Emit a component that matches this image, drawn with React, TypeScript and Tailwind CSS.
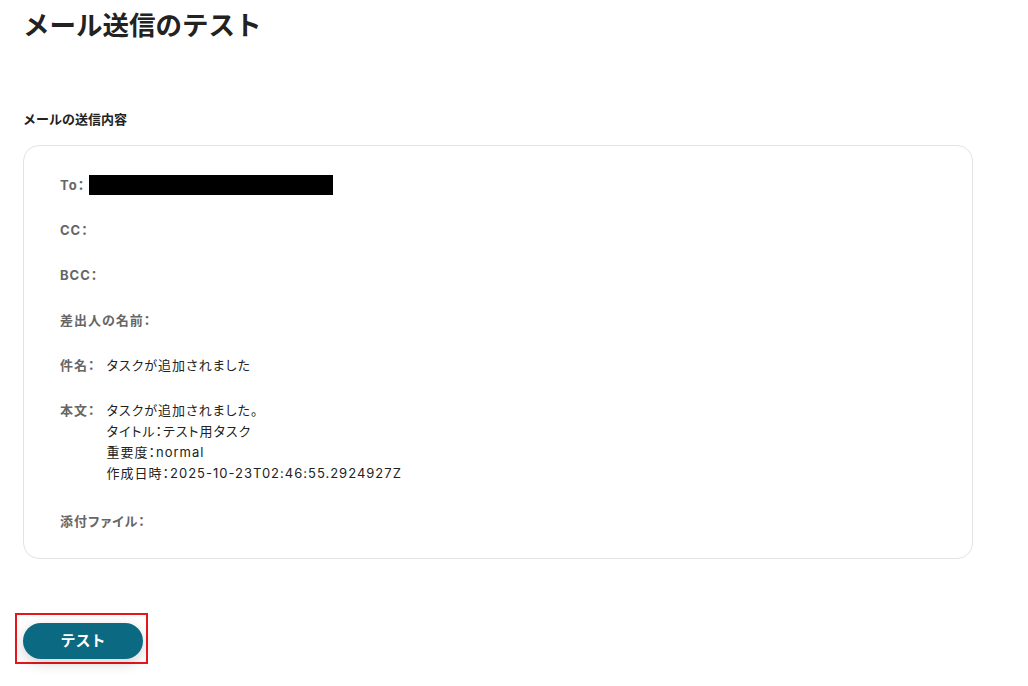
import React from 'react';

const font = { fontFamily: 'Inter, "Noto Sans CJK JP", sans-serif' };

const Row: React.FC<{ label: string; children?: React.ReactNode; last?: boolean }> = ({ label, children, last }) => (
  <div className={`flex items-start text-[13px] leading-[20px] ${last ? '' : 'mb-[25px]'}`}>
    <span className="font-bold text-[#666]">{label}</span>
    {children}
  </div>
);

export default function App() {
  const body = [
    'タスクが追加されました。',
    'タイトル：テスト用タスク',
    '重要度：normal',
    '作成日時：2025-10-23T02:46:55.2924927Z',
  ];

  return (
    <div className="w-[1028px] h-[686px] bg-white text-[#222] pl-[23px]" style={font}>
      <h1 className="text-[26.5px] font-bold leading-[36px] pt-[7px]">メール送信のテスト</h1>

      <h2 className="mt-[66px] text-[13px] font-bold leading-[20px]">メールの送信内容</h2>

      <div className="mt-[16px] w-[950px] border border-[#e3e3e3] rounded-[16px] pl-[36px] pt-[29px] pb-[27px] tracking-[1px] [font-feature-settings:'palt']">
        <Row label="To：">
          <div className="ml-[4px] w-[244px] h-[20px] bg-black" />
        </Row>
        <Row label="CC：" />
        <Row label="BCC：" />
        <Row label="差出人の名前：" />
        <Row label="件名：">
          <span className="ml-[11px]">タスクが追加されました</span>
        </Row>
        <div className="flex items-start text-[13px] leading-[21px] mb-[27px]">
          <span className="font-bold text-[#666]">本文：</span>
          <div className="ml-[11px] flex flex-col">
            {body.map((l) => (
              <span key={l}>{l}</span>
            ))}
          </div>
        </div>
        <Row label="添付ファイル：" last />
      </div>

      <div className="mt-[54px] ml-[-8px] inline-block border-2 border-[#e8161b] pl-[6px] pt-[8px] pr-[3px] pb-[3px]">
        <button className="w-[120px] h-[36px] rounded-full bg-[#0b6a82] text-white font-bold text-[15px] shadow-[0_4px_14px_rgba(0,0,0,0.18)]">
          テスト
        </button>
      </div>
    </div>
  );
}
